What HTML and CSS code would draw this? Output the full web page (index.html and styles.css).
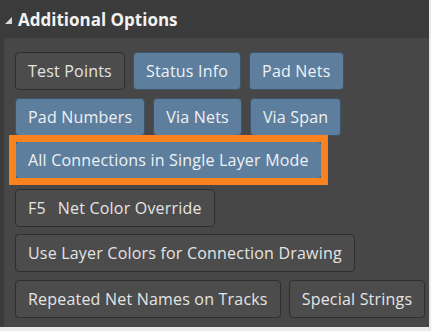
FILE: index.html
```html
<!DOCTYPE html>
<html lang="en">
<head>
    <meta charset="UTF-8">
    <title>Additional Options</title>
    <link rel="stylesheet" href="styles.css">
</head>
<body>
    <div class="section">
        <div class="section-header">
            <svg class="collapse-icon" width="7" height="7" viewBox="0 0 7 7"><polygon points="7,0 7,7 0,7" fill="#d8d8d8"/></svg>
            <span>Additional Options</span>
        </div>
        <div class="panel">
            <div class="row">
                <button class="toggle">Test Points</button>
                <button class="toggle on">Status Info</button>
                <button class="toggle on">Pad Nets</button>
            </div>
            <div class="row">
                <button class="toggle on">Pad Numbers</button>
                <button class="toggle on">Via Nets</button>
                <button class="toggle on">Via Span</button>
            </div>
            <div class="row">
                <button class="toggle on highlight">All Connections in Single Layer Mode</button>
            </div>
            <div class="row">
                <button class="toggle"><span class="key">F5</span>Net Color Override</button>
            </div>
            <div class="row">
                <button class="toggle">Use Layer Colors for Connection Drawing</button>
            </div>
            <div class="row">
                <button class="toggle">Repeated Net Names on Tracks</button>
                <button class="toggle">Special Strings</button>
            </div>
        </div>
    </div>
</body>
</html>
```

FILE: styles.css
```css
body {
    margin: 0;
    padding: 0;
    background-color: #ebebeb;
    font-family: 'Open Sans', 'Noto Sans', sans-serif;
}
.section {
    width: 429px;
    height: 327px;
    background-color: #3b3b3b;
    display: flex;
    flex-direction: column;
}
.section-header {
    height: 38px;
    display: flex;
    align-items: center;
    padding-left: 5px;
    color: #f2f2f2;
    font-weight: bold;
    font-size: 17px;
}
.collapse-icon {
    margin-right: 6px;
    margin-top: 2px;
}
.panel {
    flex: 1;
    margin-left: 4px;
    background-color: #474747;
    border-top-left-radius: 4px;
    padding: 14px 0 0 11px;
    display: flex;
    flex-direction: column;
    gap: 7.5px;
}
.row {
    display: flex;
    gap: 8px;
}
.toggle {
    height: 38px;
    padding: 0 12px;
    font-family: inherit;
    font-size: 16px;
    letter-spacing: 0.2px;
    color: #e4e4e4;
    background-color: #4c4c4c;
    border: 1px solid #2e2e2e;
    border-radius: 4px;
    white-space: nowrap;
}
.toggle.on {
    background-color: #5d7e9d;
    border-color: #3e5468;
    color: #eef2f6;
}
.highlight {
    position: relative;
    margin: -2px 0 2px;
}
.highlight::after {
    content: "";
    position: absolute;
    top: -7px;
    left: -7px;
    right: -7px;
    bottom: -7px;
    border: 7px solid #f7821f;
}
.key {
    margin-right: 12px;
}
```
